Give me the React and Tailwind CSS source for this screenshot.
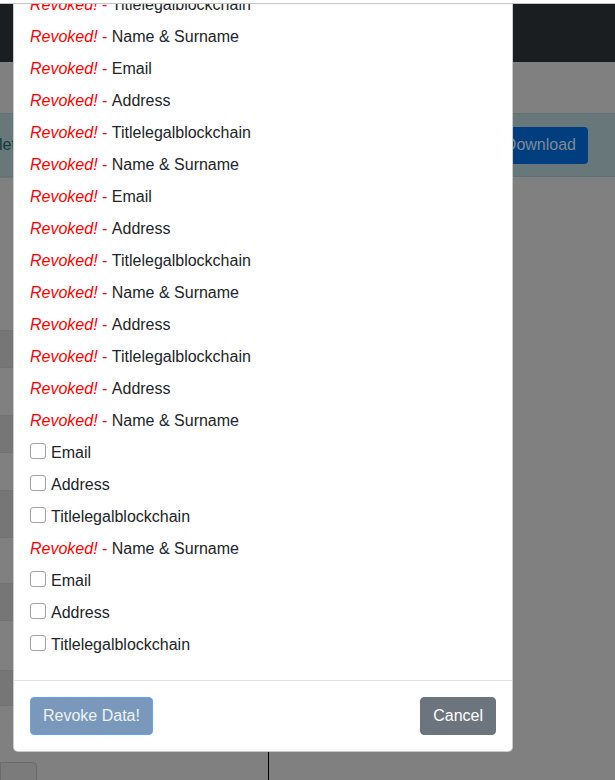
import React from 'react';

const rows = [
  { revoked: true, label: 'Titlelegalblockchain' },
  { revoked: true, label: 'Name & Surname' },
  { revoked: true, label: 'Email' },
  { revoked: true, label: 'Address' },
  { revoked: true, label: 'Titlelegalblockchain' },
  { revoked: true, label: 'Name & Surname' },
  { revoked: true, label: 'Email' },
  { revoked: true, label: 'Address' },
  { revoked: true, label: 'Titlelegalblockchain' },
  { revoked: true, label: 'Name & Surname' },
  { revoked: true, label: 'Address' },
  { revoked: true, label: 'Titlelegalblockchain' },
  { revoked: true, label: 'Address' },
  { revoked: true, label: 'Name & Surname' },
  { revoked: false, label: 'Email' },
  { revoked: false, label: 'Address' },
  { revoked: false, label: 'Titlelegalblockchain' },
  { revoked: true, label: 'Name & Surname' },
  { revoked: false, label: 'Email' },
  { revoked: false, label: 'Address' },
  { revoked: false, label: 'Titlelegalblockchain' },
];

// striped table rows behind the backdrop (only a sliver shows)
const stripes = [
  { h: 'h-[153px]', dark: false },
  { h: 'h-[37px]', dark: true },
  { h: 'h-[48px]', dark: false },
  { h: 'h-[37px]', dark: true },
  { h: 'h-[38px]', dark: false },
  { h: 'h-[47px]', dark: true },
  { h: 'h-[46px]', dark: false },
  { h: 'h-[37px]', dark: true },
  { h: 'h-[50px]', dark: false },
  { h: 'h-[35px]', dark: true },
  { h: 'h-[47px]', dark: false },
];

const ItemRow = ({ revoked, label }) => (
  <div className="flex items-start h-6 leading-6 mb-2 text-[#212529]">
    {revoked ? (
      <span className="text-[#ff0000] whitespace-pre">
        <i>Revoked!</i>{' - '}
      </span>
    ) : (
      <span className="mt-[2px] mr-[5px] w-[16px] h-[16px] rounded-[3px] border border-[#a3a3a3] bg-white shrink-0" />
    )}
    <span>{label}</span>
  </div>
);

export default function App() {
  return (
    <div
      className="relative w-[615px] h-[780px] overflow-hidden bg-[#808080] text-base"
      style={{ fontFamily: '"Liberation Sans", Arial, sans-serif' }}
    >
      {/* dimmed page behind the modal */}
      <div className="flex flex-col pt-[4px]">
        <div className="h-[58px] bg-[#1b1e21]" />
        <div className="h-[51px]" />
        <div className="h-[64px] flex items-center justify-between bg-[#687779] border-y border-[#5f7275]">
          <span className="text-[#0e3a40] -ml-[1px]">let</span>
          <button className="mr-[27px] h-[37px] px-3 rounded bg-[#003e80] text-[#7f8a96]">
            Download
          </button>
        </div>
        <div className="w-[268px] flex flex-col">
          {stripes.map((s, i) => (
            <div
              key={i}
              className={`${s.h} border-t border-[#707274] ${s.dark ? 'bg-[#767676]' : 'bg-[#808080]'}`}
            />
          ))}
        </div>
        <div className="flex h-[40px]">
          <div className="w-[269px] border-r border-black">
            <div className="mt-[10px] w-[37px] h-[30px] rounded-tr bg-[#7b7b7b] border border-[#6b6b6b]" />
          </div>
        </div>
      </div>

      {/* modal */}
      <div className="absolute left-[13px] top-[-24px] w-[500px] bg-white border border-black/20 rounded-b-[5px] z-10">
        <div className="p-4 pb-2">
          {rows.map((r, i) => (
            <ItemRow key={i} {...r} />
          ))}
        </div>
        <div className="mt-[7px] border-t border-[#dee2e6] p-4 flex justify-between">
          <button className="h-[38px] px-3 rounded bg-[#7a98bb] border border-[#5fa5f5] text-[#eef2f7]">
            Revoke Data!
          </button>
          <button className="h-[38px] px-3 rounded bg-[#6c757d] border border-[#6c757d] text-white">
            Cancel
          </button>
        </div>
      </div>

      {/* thin strip on top */}
      <div className="absolute top-0 left-0 right-0 h-[4px] bg-white border-b border-[#c6c6c6] z-20" />
    </div>
  );
}
